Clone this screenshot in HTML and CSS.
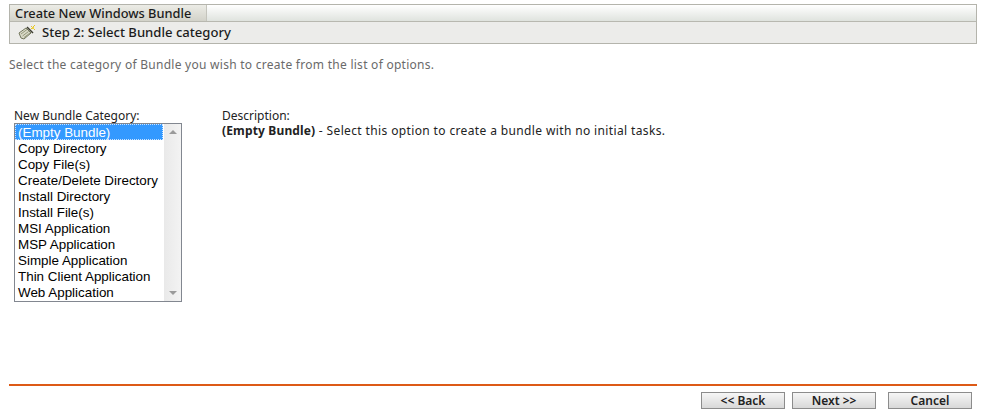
FILE: index.html
```html
<!DOCTYPE html>
<html lang="en">
<head>
    <meta charset="UTF-8">
    <title>Create New Windows Bundle</title>
    <link rel="stylesheet" href="styles.css">
</head>
<body>
    <div class="page">
        <header class="panel-head">
            <div class="title-row">
                <h1 class="title-tab">Create New Windows Bundle</h1>
            </div>
            <div class="step-row">
                <svg class="step-icon" width="19" height="16" viewBox="0 0 19 16">
                    <path d="M1 9 L8 4 L13 9 L6 15 L3 14 Z" fill="#d9d9c8" stroke="#72765c" stroke-width="1"/>
                    <path d="M3 10 L9 5.5 M4.5 12 L10.5 7.5 M6 13.5 L12 9" stroke="#94987a" stroke-width="1" fill="none"/>
                    <path d="M9 3 L15 9" stroke="#3c3c30" stroke-width="1.5" fill="none"/>
                    <path d="M13 2 L17 6 M17 1 L13 5" stroke="#e3c22e" stroke-width="1" fill="none"/>
                    <rect x="14" y="3" width="2" height="2" fill="#f0d440"/>
                </svg>
                <h2 class="step-title">Step 2: Select Bundle category</h2>
            </div>
        </header>

        <p class="intro">Select the category of Bundle you wish to create from the list of options.</p>

        <main class="chooser">
            <div class="category">
                <div class="field-label">New Bundle Category:</div>
                <div class="listbox">
                    <ul class="options">
                        <li class="selected">(Empty Bundle)</li>
                        <li>Copy Directory</li>
                        <li>Copy File(s)</li>
                        <li>Create/Delete Directory</li>
                        <li>Install Directory</li>
                        <li>Install File(s)</li>
                        <li>MSI Application</li>
                        <li>MSP Application</li>
                        <li>Simple Application</li>
                        <li>Thin Client Application</li>
                        <li>Web Application</li>
                    </ul>
                    <div class="scrollbar">
                        <span class="arrow arrow-up"></span>
                        <span class="arrow arrow-down"></span>
                    </div>
                </div>
            </div>
            <div class="description">
                <div class="field-label">Description:</div>
                <p class="description-text"><b>(Empty Bundle)</b> - Select this option to create a bundle with no initial tasks.</p>
            </div>
        </main>

        <footer class="actions">
            <button class="btn" type="button">&lt;&lt; Back</button>
            <button class="btn" type="button">Next &gt;&gt;</button>
            <button class="btn btn-cancel" type="button">Cancel</button>
        </footer>
    </div>
</body>
</html>
```
FILE: styles.css
```css
/* General Reset */
* {
  margin: 0;
  padding: 0;
  box-sizing: border-box;
}

body {
  font-family: "Noto Sans", "DejaVu Sans", sans-serif;
  background-color: #fff;
  color: #222;
  font-size: 12px;
}

.page {
  width: 968px;
  height: 415px;
  margin-left: 9px;
  padding-top: 4px;
  display: flex;
  flex-direction: column;
}

/* Header */
.panel-head {
  height: 40px;
  border: 1px solid #b4b4ac;
  background-color: #ececea;
}

.title-row {
  height: 17px;
  background: linear-gradient(to bottom, #fff, #dfe3de);
  border-bottom: 1px solid #b8b8b0;
}

.title-tab {
  width: 197px;
  height: 16px;
  padding-left: 5px;
  font-size: 12.8px;
  font-weight: 500;
  line-height: 16px;
  color: #1c1c1c;
  background: linear-gradient(to bottom, #ecece6, #d2d2c9);
  border-right: 1px solid #c4c4bc;
}

.step-row {
  display: flex;
  align-items: center;
  height: 21px;
  padding-left: 8px;
  padding-bottom: 2px;
  gap: 5px;
}

.step-title {
  font-size: 13.1px;
  font-weight: 500;
  color: #1c1c1c;
}

.intro {
  margin-top: 13px;
  font-size: 12px;
  line-height: 16px;
  letter-spacing: 0.27px;
  color: #6a6a6a;
}

/* Category chooser */
.chooser {
  display: flex;
  margin-top: 36px;
  margin-left: 5px;
  flex: 1;
}

.category {
  width: 208px;
}

.field-label {
  font-size: 12px;
  line-height: 14px;
  color: #222;
}

.listbox {
  display: flex;
  width: 168px;
  height: 179px;
  border: 1px solid #828790;
  font-family: "Liberation Sans", Arial, sans-serif;
  font-size: 13.4px;
}

.options {
  list-style: none;
  width: 148px;
}

.options li {
  height: 16px;
  line-height: 17px;
  padding-left: 3px;
  color: #000;
  white-space: nowrap;
}

.options li.selected {
  background-color: #3399ff;
  color: #fff;
  outline: 1px dotted #cde4ff;
  outline-offset: -1px;
}

.scrollbar {
  flex: 1;
  display: flex;
  flex-direction: column;
  justify-content: space-between;
  align-items: center;
  margin-left: 1px;
  padding: 6px 0;
  background: linear-gradient(to right, #e9e9e9, #f3f3f3);
}

.arrow {
  width: 0;
  height: 0;
  border-left: 4px solid transparent;
  border-right: 4px solid transparent;
}

.arrow-up {
  border-bottom: 4px solid #9a9a9a;
}

.arrow-down {
  border-top: 4px solid #9a9a9a;
}

.description-text {
  font-size: 12px;
  line-height: 16px;
  letter-spacing: 0.37px;
  color: #222;
}

.description-text b {
  letter-spacing: 0.15px;
}

/* Footer buttons */
.actions {
  display: flex;
  justify-content: flex-end;
  height: 31px;
  padding: 6px 5px 0 0;
  border-top: 2px solid #dd5a16;
}

.btn {
  width: 84px;
  height: 17px;
  margin-left: 7px;
  padding-bottom: 1px;
  font-family: "Noto Sans", "DejaVu Sans", sans-serif;
  font-size: 12px;
  font-weight: 600;
  line-height: 13px;
  color: #222;
  background: linear-gradient(to bottom, #f6f6f6, #d8d8d8);
  border: 1px solid #8c8c8c;
}

.btn-cancel {
  margin-left: 12px;
}
```
